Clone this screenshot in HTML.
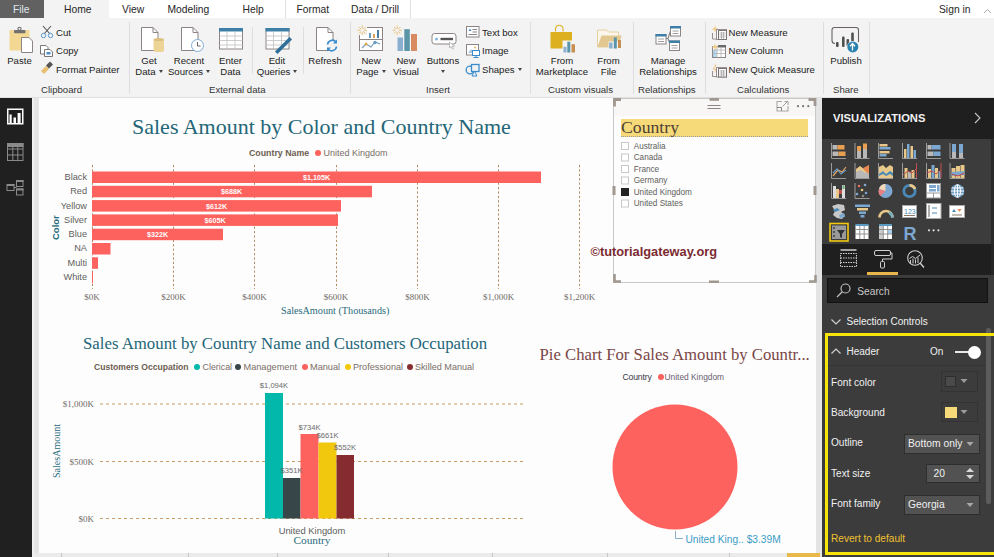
<!DOCTYPE html>
<html><head><meta charset="utf-8">
<style>
*{margin:0;padding:0;box-sizing:border-box}
html,body{width:994px;height:557px;overflow:hidden;background:#fff;font-family:"Liberation Sans",sans-serif}
.a{position:absolute;white-space:nowrap}
#tabs{position:absolute;left:0;top:0;width:994px;height:19px;background:#fff;border-bottom:1px solid #dcdcdc}
.tab{position:absolute;top:4px;font-size:10.3px;color:#262626}
#ribbon{position:absolute;left:0;top:18px;width:994px;height:80px;background:#f3f3f3;border-bottom:1px solid #e0e0e0}
.rl{position:absolute;font-size:9.6px;color:#222;white-space:nowrap;text-align:center;line-height:11px}
.gl{position:absolute;top:66px;font-size:9.6px;color:#333;white-space:nowrap}
.sep{position:absolute;top:4px;width:1px;height:72px;background:#dedede}
#nav{position:absolute;left:0;top:98px;width:32px;height:459px;background:#202020}
#canvasbg{position:absolute;left:32px;top:98px;width:790px;height:459px;background:#e4e4e4;border-left:2px solid #f0f0f0}
#canvas{position:absolute;left:39px;top:98px;width:777px;height:455px;background:#fdfdfd}
#pane{position:absolute;left:822px;top:98px;width:172px;height:459px;background:#1f1f1f}
.serif{font-family:"Liberation Serif",serif}
.dd{display:inline-block;width:0;height:0;border-left:2.5px solid transparent;border-right:2.5px solid transparent;border-top:3px solid #444;vertical-align:2px;margin-left:3px}
</style></head><body>
<div id="tabs">
  <div class="a" style="left:0;top:0;width:44px;height:19px;background:#616161"></div>
  <div class="a" style="left:44px;top:0;width:65px;height:19px;background:#f3f3f3"></div>
  <div class="tab" style="left:13px;color:#dfe6ee">File</div>
  <div class="tab" style="left:64px">Home</div>
  <div class="tab" style="left:122px">View</div>
  <div class="tab" style="left:167.5px">Modeling</div>
  <div class="tab" style="left:242.5px">Help</div>
  <div class="a" style="left:285px;top:0;width:1px;height:18px;background:#e0e0e0"></div>
  <div class="tab" style="left:296.5px">Format</div>
  <div class="tab" style="left:351px">Data / Drill</div>
  <div class="a" style="left:410px;top:0;width:1px;height:18px;background:#e0e0e0"></div>
  <div class="tab" style="left:939px">Sign in</div>
</div>
<div id="ribbon">
  <!-- clipboard -->
  <div class="rl" style="left:0;top:37px;width:39px">Paste</div>
  <div class="rl" style="left:56px;top:9px">Cut</div>
  <div class="rl" style="left:56px;top:27px">Copy</div>
  <div class="rl" style="left:56px;top:46px">Format Painter</div>
  <div class="gl" style="left:41px">Clipboard</div>
  <div class="sep" style="left:129px"></div>
  <!-- external data -->
  <div class="rl" style="left:129px;top:37px;width:40px">Get<br>Data<span class="dd"></span></div>
  <div class="rl" style="left:167px;top:37px;width:44px">Recent<br>Sources<span class="dd"></span></div>
  <div class="rl" style="left:210px;top:37px;width:41px">Enter<br>Data</div>
  <div class="sep" style="left:252px;top:9px;height:47px"></div>
  <div class="rl" style="left:255px;top:37px;width:44px">Edit<br>Queries<span class="dd"></span></div>
  <div class="gl" style="left:209px">External data</div>
  <div class="sep" style="left:303px;top:9px;height:47px"></div>
  <div class="rl" style="left:304px;top:37px;width:42px">Refresh</div>
  <div class="sep" style="left:350px"></div>
  <!-- insert -->
  <div class="rl" style="left:352px;top:37px;width:38px">New<br>Page<span class="dd"></span></div>
  <div class="rl" style="left:388px;top:37px;width:36px">New<br>Visual</div>
  <div class="rl" style="left:423px;top:37px;width:40px">Buttons<br><span class="dd" style="margin-left:0"></span></div>
  <div class="rl" style="left:482px;top:9px">Text box</div>
  <div class="rl" style="left:482px;top:27px">Image</div>
  <div class="rl" style="left:482px;top:46px">Shapes<span class="dd"></span></div>
  <div class="gl" style="left:426px">Insert</div>
  <div class="sep" style="left:530px"></div>
  <div class="rl" style="left:532px;top:37px;width:60px">From<br>Marketplace</div>
  <div class="rl" style="left:592px;top:37px;width:33px">From<br>File</div>
  <div class="gl" style="left:548px">Custom visuals</div>
  <div class="sep" style="left:633px"></div>
  <div class="rl" style="left:634px;top:37px;width:68px">Manage<br>Relationships</div>
  <div class="gl" style="left:638px">Relationships</div>
  <div class="sep" style="left:705px"></div>
  <div class="rl" style="left:728.5px;top:9px">New Measure</div>
  <div class="rl" style="left:728.5px;top:27px">New Column</div>
  <div class="rl" style="left:728.5px;top:46px">New Quick Measure</div>
  <div class="gl" style="left:737px">Calculations</div>
  <div class="sep" style="left:823px"></div>
  <div class="rl" style="left:826px;top:37px;width:40px">Publish</div>
  <div class="gl" style="left:833px">Share</div>
  <div class="sep" style="left:869px"></div>

<svg class="a" style="left:0;top:-18px" width="994" height="97">
 <!-- Paste -->
 <rect x="9.5" y="30" width="20" height="20.5" fill="#f2d892"/>
 <rect x="14" y="30" width="11.5" height="3.3" rx="1" fill="#707070"/>
 <circle cx="19.5" cy="28.8" r="1.6" fill="none" stroke="#707070" stroke-width="1.1"/>
 <path d="M21.5 37.5 H29 L32.5 41 V52.5 H21.5 Z" fill="#fff" stroke="#8c8484" stroke-width="1"/>
 <!-- Cut -->
 <path d="M43 26 L50 34 M51 26 L44 34" stroke="#555" stroke-width="1.1"/>
 <circle cx="43.5" cy="35.5" r="2.2" fill="none" stroke="#5a9ad0" stroke-width="1"/>
 <circle cx="50.5" cy="35.5" r="2.2" fill="none" stroke="#5a9ad0" stroke-width="1"/>
 <!-- Copy -->
 <path d="M40.5 45.5 H46 L48 47.5 V54 H40.5 Z" fill="#fff" stroke="#777" stroke-width="1"/>
 <path d="M44.5 49.5 H50 L52.5 52 V56.5 H44.5 Z" fill="#fff" stroke="#777" stroke-width="1"/>
 <rect x="46.5" y="52" width="4" height="2.5" fill="#4d8fc8"/>
 <!-- Format painter -->
 <path d="M41 71 L46 66 L49 69 L44 74 Z" fill="#e8c070"/>
 <path d="M46 65.5 L50 61.5 L53 64.5 L49 68.5 Z" fill="#555"/>
 <!-- Get Data -->
 <path d="M141.5 27.5 H153 L158 32.5 V50.5 H141.5 Z" fill="#fff" stroke="#8c8484" stroke-width="1"/>
 <path d="M153 27.5 V32.5 H158" fill="none" stroke="#8c8484" stroke-width="1"/>
 <rect x="153.5" y="38.5" width="10.5" height="13.5" rx="2.5" fill="#ecd496"/>
 <ellipse cx="158.75" cy="39.5" rx="5.25" ry="1.6" fill="#dcc080"/>
 <!-- Recent Sources -->
 <path d="M181.5 27.5 H193 L198 32.5 V50.5 H181.5 Z" fill="#fff" stroke="#8c8484" stroke-width="1"/>
 <path d="M193 27.5 V32.5 H198" fill="none" stroke="#8c8484" stroke-width="1"/>
 <circle cx="197.5" cy="45.5" r="6" fill="#fff" stroke="#70a4d4" stroke-width="0.9"/>
 <path d="M197.5 42 V46 H200.5" fill="none" stroke="#555" stroke-width="0.9"/>
 <!-- Enter Data -->
 <rect x="219.5" y="28.5" width="23" height="20.5" fill="#fff" stroke="#8c8484" stroke-width="1"/>
 <rect x="219" y="28" width="24" height="3.5" fill="#3e7fa8"/>
 <path d="M219.5 36 H242.5 M219.5 40.5 H242.5 M219.5 45 H242.5 M227 31.5 V49 M235 31.5 V49" stroke="#c0c0c0" stroke-width="0.8"/>
 <!-- Edit Queries -->
 <rect x="266" y="28.5" width="23" height="20.5" fill="#fff" stroke="#8c8484" stroke-width="1"/>
 <rect x="265.5" y="28" width="24" height="3.5" fill="#3e7fa8"/>
 <path d="M266 36 H289 M266 40.5 H289 M266 45 H289 M273.5 31.5 V49 M281.5 31.5 V49" stroke="#c0c0c0" stroke-width="0.8"/>
 <path d="M275 51.5 L289.5 37 L292 39.5 L277.5 54 Z" fill="#2e6f9a"/>
 <!-- Refresh -->
 <path d="M316.5 27.5 H328 L333 32.5 V50.5 H316.5 Z" fill="#fff" stroke="#8c8484" stroke-width="1"/>
 <path d="M328 27.5 V32.5 H333" fill="none" stroke="#8c8484" stroke-width="1"/>
 <circle cx="332" cy="45.5" r="5.5" fill="#f3f3f3"/>
 <path d="M327.5 44.5 A4.8 4.8 0 0 1 336 42 M336.5 46.5 A4.8 4.8 0 0 1 328 49" fill="none" stroke="#3a8ccc" stroke-width="1.6"/>
 <path d="M337 39.5 V43.5 H333 Z M327 51.5 V47.5 H331 Z" fill="#3a8ccc"/>
 <!-- New Page -->
 <rect x="359.5" y="27.5" width="23" height="23" fill="#fff" stroke="#8c8484" stroke-width="1"/>
 <path d="M359.5 39.5 H382.5" stroke="#8c8484" stroke-width="1"/>
 <rect x="357" y="25" width="10" height="10" fill="#f3f3f3"/><path d="M359 27 L365.5 33.5 M365.5 27 L359 33.5 M362.2 25.5 V35 M357.5 30.2 H367" stroke="#e8c078" stroke-width="1"/><circle cx="362.2" cy="30.2" r="1.8" fill="#f3f3f3"/>
 <rect x="369" y="33" width="2" height="5" fill="#6a9ac0"/><rect x="373" y="34" width="2" height="4" fill="#e0a050"/><rect x="377" y="30" width="2" height="8" fill="#4a80a8"/>
 <path d="M362 48 L366 44 L371 47 L375 42 L380 44" fill="none" stroke="#7aa0c0" stroke-width="1.2"/>
 <circle cx="366" cy="44" r="1.5" fill="#e0a850"/><circle cx="375" cy="42.5" r="1.7" fill="#6a9ac0"/>
 <!-- New Visual -->
 <path d="M394 27 L400.5 33.5 M400.5 27 L394 33.5 M397.2 25.5 V35 M392.5 30.2 H402" stroke="#e8c078" stroke-width="1"/><circle cx="397.2" cy="30.2" r="1.8" fill="#f3f3f3"/>
 <rect x="397.5" y="37.5" width="5.5" height="13.5" fill="#8aaed0"/>
 <rect x="404.3" y="29.2" width="5.5" height="21.8" fill="#5a95a8"/>
 <rect x="411" y="34" width="6" height="17" fill="#d88a60"/>
 <!-- Buttons -->
 <rect x="432" y="33.5" width="24" height="10.5" rx="2.5" fill="#fff" stroke="#8c8484" stroke-width="1"/>
 <circle cx="436.5" cy="39" r="1.6" fill="#8ab8e0"/>
 <rect x="440.5" y="37.8" width="12.5" height="2.4" fill="#555"/>
 <path d="M449.5 42 V48 L451 46.5 L452.5 49 L453.5 48.5 L452.3 46 H454.5 Z" fill="#fff" stroke="#999" stroke-width="0.6"/>
 <!-- Text box / Image / Shapes -->
 <rect x="466.5" y="26.5" width="12.5" height="10.5" fill="#fff" stroke="#8c8484" stroke-width="1"/>
 <path d="M468.5 31 L470 28.5 L471.5 31 Z" fill="#4a8ac8"/><path d="M472.5 29.5 H477 M472.5 32 H477 M468.5 34.5 H477" stroke="#777" stroke-width="0.9"/>
 <rect x="466.5" y="44.5" width="12" height="10.5" fill="#fff" stroke="#8c8484" stroke-width="1"/>
 <path d="M468 53 L471 49 L474 53 Z" fill="#a8c8e0"/><circle cx="475" cy="47.5" r="1" fill="#e8b060"/>
 <rect x="472.5" y="50.5" width="7" height="5" fill="#fff" stroke="#3a8ccc" stroke-width="1"/><path d="M476 55.5 V57.5 M473.5 57.5 H478.5" stroke="#3a8ccc" stroke-width="1"/>
 <circle cx="470" cy="70" r="3.8" fill="none" stroke="#3a8ccc" stroke-width="1.3"/>
 <rect x="471.5" y="64.5" width="7.5" height="7" fill="#f3f3f3" stroke="#3a8ccc" stroke-width="1.3"/>
 <path d="M472 76 L474.5 71 L477 76 Z" fill="none" stroke="#3a8ccc" stroke-width="1"/>
 <!-- From Marketplace -->
 <path d="M555.5 31.5 V28.5 A3.8 3.8 0 0 1 563 28.5 V31.5" fill="none" stroke="#e0b020" stroke-width="1.1"/>
 <path d="M550.5 32 H572 V48.5 H550.5 Z" fill="#ddb020"/>
 <rect x="562.5" y="40.5" width="13.5" height="12.5" fill="#f3f3f3"/>
 <rect x="563.5" y="46.8" width="3" height="5.7" fill="#8ab0d0"/><rect x="567.3" y="41.7" width="3" height="10.8" fill="#5a95a8"/><rect x="571.5" y="44.2" width="3.5" height="8.3" fill="#c89050"/>
 <!-- From File -->
 <path d="M597.5 30 H606.5 L608.5 32 H618.5 V47 H597.5 Z" fill="#fbf6ec" stroke="#e6d0a0" stroke-width="1"/>
 <path d="M597.5 47 L601.5 35.5 H621.5 L618.5 47 Z" fill="#e2c890"/>
 <rect x="608.5" y="41.5" width="13" height="7.5" fill="#f3f3f3"/>
 <rect x="609.1" y="42.5" width="3.4" height="6" fill="#8ab0d0"/><rect x="613.8" y="37.4" width="3" height="11.1" fill="#5a95a8"/><rect x="618" y="40" width="3" height="8" fill="#c89050"/>
 <!-- Manage Relationships -->
 <path d="M666 38.5 H668 L670.5 31 M666 38.5 H668 L670.5 45.5" fill="none" stroke="#777" stroke-width="1"/>
 <rect x="670.5" y="26.5" width="10" height="9.5" fill="#fff" stroke="#8c8484" stroke-width="1"/><rect x="670" y="26" width="11" height="2.5" fill="#3e7fa8"/>
 <path d="M672.5 31 H678.5 M672.5 33.5 H678.5" stroke="#888" stroke-width="0.8"/>
 <rect x="656" y="34.5" width="10" height="9.5" fill="#fff" stroke="#8c8484" stroke-width="1"/><rect x="655.5" y="34" width="11" height="2.5" fill="#3e7fa8"/>
 <path d="M658 39 H664 M658 41.5 H664" stroke="#888" stroke-width="0.8"/>
 <rect x="669.5" y="41" width="10" height="9.5" fill="#fff" stroke="#8c8484" stroke-width="1"/><rect x="669" y="40.5" width="11" height="2.5" fill="#3e7fa8"/>
 <path d="M671.5 45.5 H677.5 M671.5 48 H677.5" stroke="#888" stroke-width="0.8"/>
 <!-- Calculations icons -->
 <path d="M712.5 33 V39 H717" fill="none" stroke="#9a9090" stroke-width="1"/>
 <path d="M715 25.5 L716 28 L718.5 29 L716 30 L715 32.5 L714 30 L711.5 29 L714 28 Z" fill="#f0d090"/>
 <rect x="716.5" y="29.5" width="10" height="10" fill="#fff" stroke="#9a9090" stroke-width="1"/>
 <rect x="718.5" y="30.5" width="8" height="9" fill="#fff" stroke="#7a7474" stroke-width="1"/>
 <path d="M719.5 33 H725.5 M719.5 35 H725.5 M719.5 37 H725.5 M721.5 32 V39 M723.5 32 V39" stroke="#a8a8a8" stroke-width="0.8"/>
 <rect x="712.5" y="46.5" width="13" height="11" fill="#fff" stroke="#8c8484" stroke-width="1"/>
 <rect x="718" y="45" width="8" height="2.5" fill="#6a6a6a"/>
 <rect x="713" y="50" width="3.5" height="7" fill="#b0d8f0"/>
 <path d="M712.5 50 H725.5 M712.5 53.5 H725.5 M717 47 V57.5 M721 47 V57.5" stroke="#b0b0b0" stroke-width="0.8"/>
 <path d="M715 43.5 L716 46 L718.5 47 L716 48 L715 50.5 L714 48 L711.5 47 L714 46 Z" fill="#f0d090"/>
 <path d="M712.5 71 V76.5 H717" fill="none" stroke="#9a9090" stroke-width="1"/>
 <path d="M715 63.5 L716.5 66 L714 68 L717 69.5 L714 73 L715 70 L712.5 69 L714.5 66.5 Z" fill="#f0c890"/>
 <rect x="716.5" y="67.5" width="10" height="9.5" fill="#fff" stroke="#9a9090" stroke-width="1"/>
 <rect x="718.5" y="68.5" width="8" height="8.5" fill="#fff" stroke="#7a7474" stroke-width="1"/>
 <path d="M719.5 71 H725.5 M719.5 73 H725.5 M719.5 75 H725.5 M721.5 70 V77 M723.5 70 V77" stroke="#a8a8a8" stroke-width="0.8"/>
 <!-- Publish -->
 <path d="M835 43.5 A3 3 0 0 1 832 40.5 V30 A2.5 2.5 0 0 1 834.5 27.5 H856 A2.5 2.5 0 0 1 858.5 30 V42" fill="none" stroke="#6a6262" stroke-width="1.1"/>
 <rect x="836" y="42" width="2.6" height="5" rx="1" fill="#505050"/><rect x="842" y="36.5" width="2.6" height="10.5" rx="1" fill="#505050"/><rect x="846.5" y="39" width="2.6" height="7" rx="1" fill="#505050"/><rect x="851.2" y="32.5" width="2.6" height="9" rx="1" fill="#505050"/>
 <circle cx="852.8" cy="46.9" r="5.8" fill="#f3f3f3"/><circle cx="852.8" cy="46.9" r="5.5" fill="#2a82b0"/>
 <path d="M852.5 50.5 V44 M850 46.3 L852.5 43.5 L855 46.3" fill="none" stroke="#fff" stroke-width="1.3"/>
 <!-- Sign in caret -->
 <path d="M984 13 L987.5 9.5 L991 13" fill="none" stroke="#aaa" stroke-width="1"/>
</svg>
</div>
<div id="nav"></div>
<svg class="a" style="left:0;top:97px" width="32" height="110">
 <rect x="7.75" y="12.25" width="15" height="14.5" fill="none" stroke="#fff" stroke-width="1.5"/>
 <rect x="9.5" y="17.5" width="2.2" height="9" fill="#fff"/><rect x="13.5" y="20.5" width="2.5" height="6" fill="#fff"/><rect x="17.6" y="16" width="3" height="10.5" fill="#fff"/>
 <g fill="none" stroke="#8a8a8a" stroke-width="1">
  <rect x="7.5" y="46.5" width="15.5" height="17"/>
  <path d="M7.5 52 H23 M7.5 58 H23 M12.8 50 V63.5 M17.8 50 V63.5"/>
 </g>
 <rect x="7" y="46" width="16.5" height="4" fill="#8a8a8a"/>
 <g fill="none" stroke="#8a8a8a" stroke-width="1">
  <rect x="7" y="87.5" width="7" height="6"/><rect x="16.5" y="83.5" width="6.5" height="6"/><rect x="16.5" y="92" width="6.5" height="6"/>
  <path d="M14 90.5 H16.5"/>
 </g>
 <rect x="7" y="87" width="7.5" height="2" fill="#8a8a8a"/><rect x="16" y="83" width="7.5" height="2" fill="#8a8a8a"/><rect x="16" y="91.5" width="7.5" height="2" fill="#8a8a8a"/>
</svg>
<div id="canvasbg"></div>

<div id="canvas"></div>
<!-- Bar chart 1 -->
<div class="a serif" style="left:132px;top:115px;font-size:22px;line-height:24px;color:#236678">Sales Amount by Color and Country Name</div>
<div class="a" style="left:249px;top:147px;font-size:8.8px;font-weight:700;color:#6e5e50;line-height:12px">Country Name</div>
<div class="a" style="left:315px;top:150px;width:6px;height:6px;border-radius:50%;background:#fd625e"></div>
<div class="a" style="left:323.5px;top:147px;font-size:9px;color:#7a6e66;line-height:12px">United Kingdom</div>
<svg class="a" style="left:0;top:0" width="994" height="557">
 <g stroke="#b48a60" stroke-width="1" stroke-dasharray="2.2,2.2">
  <line x1="92.5" y1="165" x2="92.5" y2="289"/>
  <line x1="173.5" y1="165" x2="173.5" y2="289"/>
  <line x1="254.5" y1="165" x2="254.5" y2="289"/>
  <line x1="336.5" y1="165" x2="336.5" y2="289"/>
  <line x1="417.5" y1="165" x2="417.5" y2="289"/>
  <line x1="498.5" y1="165" x2="498.5" y2="289"/>
  <line x1="579.5" y1="165" x2="579.5" y2="289"/>
 </g>
 <g fill="#fd625e">
  <rect x="92" y="171.5" width="449" height="11.5"/>
  <rect x="92" y="185.8" width="280" height="11.5"/>
  <rect x="92" y="200.1" width="249" height="11.5"/>
  <rect x="92" y="214.4" width="246" height="11.5"/>
  <rect x="92" y="228.7" width="131" height="11.5"/>
  <rect x="92" y="243" width="18.5" height="11.5"/>
  <rect x="92" y="257.3" width="6" height="11.5"/>
  <rect x="92" y="271.6" width="1" height="11.5"/>
 </g>
 <!-- chart 2 gridlines -->
 <g stroke="#c89c64" stroke-width="1" stroke-dasharray="3,3">
  <line x1="100" y1="404" x2="525" y2="404"/>
  <line x1="100" y1="461.5" x2="525" y2="461.5"/>
  <line x1="100" y1="518.5" x2="525" y2="518.5"/>
 </g>
 <rect x="265" y="393" width="18" height="125.5" fill="#01b8aa"/>
 <rect x="283" y="478" width="17.5" height="40.5" fill="#374649"/>
 <rect x="300.5" y="434" width="18" height="84.5" fill="#fd625e"/>
 <rect x="318.5" y="442.5" width="18" height="76" fill="#f2c80f"/>
 <rect x="336.5" y="455" width="17.5" height="63.5" fill="#862c30"/>
 <!-- pie -->
 <circle cx="675" cy="467" r="62.5" fill="#fd625e"/>
 <path d="M675.5 531 V538.5 H683" stroke="#8ab0c8" stroke-width="1" fill="none"/>
 <!-- slicer frame -->
 <rect x="613.5" y="98.5" width="202" height="184" fill="none" stroke="#c8c8c8" stroke-width="1"/>
</svg>
<div class="a" style="left:50px;top:170px;width:37px;text-align:right;font-size:9.2px;line-height:14.3px;color:#605e5c">Black<br>Red<br>Yellow<br>Silver<br>Blue<br>NA<br>Multi<br>White</div>
<div class="a" style="left:44px;top:222px;transform:rotate(-90deg);font-size:9.5px;font-weight:700;color:#2a6b7c;line-height:12px;width:24px;text-align:center">Color</div>
<div class="a" style="left:276.5px;top:172px;width:80px;text-align:center;font-size:7.2px;font-weight:700;color:#fff;line-height:11px">$1,105K</div>
<div class="a" style="left:191.5px;top:186.3px;width:80px;text-align:center;font-size:7.2px;font-weight:700;color:#fff;line-height:11px">$688K</div>
<div class="a" style="left:176.5px;top:200.6px;width:80px;text-align:center;font-size:7.2px;font-weight:700;color:#fff;line-height:11px">$612K</div>
<div class="a" style="left:175px;top:214.9px;width:80px;text-align:center;font-size:7.2px;font-weight:700;color:#fff;line-height:11px">$605K</div>
<div class="a" style="left:117.5px;top:229.2px;width:80px;text-align:center;font-size:7.2px;font-weight:700;color:#fff;line-height:11px">$322K</div>
<div class="a serif" style="left:72px;top:291px;width:40px;text-align:center;font-size:9px;color:#706a66;line-height:12px">$0K</div>
<div class="a serif" style="left:153.5px;top:291px;width:40px;text-align:center;font-size:9px;color:#706a66;line-height:12px">$200K</div>
<div class="a serif" style="left:234.5px;top:291px;width:40px;text-align:center;font-size:9px;color:#706a66;line-height:12px">$400K</div>
<div class="a serif" style="left:316px;top:291px;width:40px;text-align:center;font-size:9px;color:#706a66;line-height:12px">$600K</div>
<div class="a serif" style="left:397.5px;top:291px;width:40px;text-align:center;font-size:9px;color:#706a66;line-height:12px">$800K</div>
<div class="a serif" style="left:473.5px;top:291px;width:50px;text-align:center;font-size:9px;color:#706a66;line-height:12px">$1,000K</div>
<div class="a serif" style="left:554.5px;top:291px;width:50px;text-align:center;font-size:9px;color:#706a66;line-height:12px">$1,200K</div>
<div class="a serif" style="left:281px;top:305px;font-size:10.2px;color:#2a6b7c;line-height:12px">SalesAmount (Thousands)</div>
<!-- chart 2 -->
<div class="a serif" style="left:83px;top:334px;font-size:16.8px;line-height:20px;color:#236678">Sales Amount by Country Name and Customers Occupation</div>
<div class="a" style="left:94px;top:361px;font-size:8.6px;font-weight:700;color:#6e5e50;line-height:12px">Customers Occupation</div>
<div class="a" style="left:194px;top:364px;width:6px;height:6px;border-radius:50%;background:#01b8aa"></div>
<div class="a" style="left:202.5px;top:361px;font-size:8.9px;color:#7a6e66;line-height:12px">Clerical</div>
<div class="a" style="left:235px;top:364px;width:6px;height:6px;border-radius:50%;background:#374649"></div>
<div class="a" style="left:243.5px;top:361px;font-size:9.2px;color:#7a6e66;line-height:12px">Management</div>
<div class="a" style="left:302px;top:364px;width:6px;height:6px;border-radius:50%;background:#fd625e"></div>
<div class="a" style="left:310px;top:361px;font-size:9.2px;color:#7a6e66;line-height:12px">Manual</div>
<div class="a" style="left:345px;top:364px;width:6px;height:6px;border-radius:50%;background:#f2c80f"></div>
<div class="a" style="left:353px;top:361px;font-size:9.1px;color:#7a6e66;line-height:12px">Professional</div>
<div class="a" style="left:407px;top:364px;width:6px;height:6px;border-radius:50%;background:#862c30"></div>
<div class="a" style="left:415px;top:361px;font-size:9.1px;color:#7a6e66;line-height:12px">Skilled Manual</div>
<div class="a serif" style="left:40px;top:398px;width:54px;text-align:right;font-size:9px;color:#706a66;line-height:12px">$1,000K</div>
<div class="a serif" style="left:40px;top:456px;width:54px;text-align:right;font-size:9px;color:#706a66;line-height:12px">$500K</div>
<div class="a serif" style="left:40px;top:513px;width:54px;text-align:right;font-size:9px;color:#706a66;line-height:12px">$0K</div>
<div class="a serif" style="left:22px;top:445px;width:70px;text-align:center;transform:rotate(-90deg);font-size:10px;color:#2a6b7c;line-height:12px">SalesAmount</div>
<div class="a" style="left:249px;top:379.5px;width:50px;text-align:center;font-size:7.6px;color:#6a6a6a;line-height:11px">$1,094K</div>
<div class="a" style="left:271.5px;top:464.5px;width:40px;text-align:center;font-size:7.6px;color:#6a6a6a;line-height:11px">$351K</div>
<div class="a" style="left:289.5px;top:421.5px;width:40px;text-align:center;font-size:7.6px;color:#6a6a6a;line-height:11px">$734K</div>
<div class="a" style="left:307.5px;top:430px;width:40px;text-align:center;font-size:7.6px;color:#6a6a6a;line-height:11px">$661K</div>
<div class="a" style="left:325px;top:442px;width:40px;text-align:center;font-size:7.6px;color:#6a6a6a;line-height:11px">$552K</div>
<div class="a" style="left:262px;top:525px;width:100px;text-align:center;font-size:9.4px;color:#605e5c;line-height:12px">United Kingdom</div>
<div class="a serif" style="left:262px;top:534px;width:100px;text-align:center;font-size:11.3px;color:#2a6b7c;line-height:13px">Country</div>
<!-- pie -->
<div class="a serif" style="left:539.5px;top:345px;font-size:16.7px;line-height:20px;color:#7a4646">Pie Chart For Sales Amount by Countr...</div>
<div class="a" style="left:622.5px;top:371px;font-size:8.7px;color:#3a3a4a;line-height:12px;letter-spacing:-0.2px">Country</div>
<div class="a" style="left:657.5px;top:373.7px;width:6px;height:6px;border-radius:50%;background:#fd625e"></div>
<div class="a" style="left:664.5px;top:371px;font-size:8.4px;color:#6a6070;line-height:12px">United Kingdom</div>
<div class="a" style="left:685.5px;top:533.5px;font-size:10.2px;color:#3c9cc4;line-height:12px">United King.. $3.39M</div>
<!-- slicer -->
<div class="a" style="left:614px;top:99px;width:201px;height:17px;background:#f8f7f6"></div>
<div class="a" style="left:620.5px;top:118.5px;width:187.5px;height:18.5px;background:#f6d978;border-bottom:1px dotted #9a9a9a"></div>
<div class="a serif" style="left:621px;top:117px;font-size:17.7px;line-height:20px;color:#4d3f35">Country</div>
<div class="a" style="left:633.7px;top:140.5px;font-size:8.2px;color:#605e5c;line-height:11.55px">Australia<br>Canada<br>France<br>Germany<br>United Kingdom<br>United States</div>
<div class="a" style="left:590.5px;top:243.5px;font-size:12.8px;font-weight:700;color:#7b2a30;line-height:16px">©tutorialgateway.org</div>


<div id="pane"></div>
<div class="a" style="left:833px;top:111px;font-size:11.2px;font-weight:700;color:#f0f0f0;line-height:14px">VISUALIZATIONS</div>
<svg class="a" style="left:971.5px;top:111px" width="10" height="14"><path d="M3 2 L8 7 L3 12" stroke="#c8c8c8" stroke-width="1.1" fill="none"/></svg>
<div class="a" style="left:991px;top:138px;width:3px;height:419px;background:#262626"></div>
<div class="a" style="left:822px;top:138.5px;width:168.5px;height:105.5px;background:#3c3c3c"></div>
<div class="a" style="left:990.5px;top:138.5px;width:3.5px;height:105.5px;background:#2a2a2a"></div>
<svg class="a" style="left:822px;top:138px" width="170" height="106">
 <g stroke="#9a9a9a" stroke-width="1" fill="none">
  <path d="M9.5 5 V20.5 H24"/><path d="M33 5 V20.5 H47.5"/><path d="M56.5 5 V20.5 H71"/><path d="M80.5 5 V20.5 H95"/><path d="M104.5 5 V20.5 H119"/><path d="M128 5 V20.5 H142.5"/>
  <path d="M9.5 25 V40.5 H24"/><path d="M33 25 V40.5 H47.5"/><path d="M56.5 25 V40.5 H71"/><path d="M80.5 25 V40.5 H95"/><path d="M104.5 25 V40.5 H119"/><path d="M128 25 V40.5 H142.5"/>
  <path d="M9.5 45 V60.5 H24"/><path d="M33 45 V60.5 H47.5"/>
 </g>
 <!-- r1 -->
 <rect x="10.5" y="7" width="5" height="4.5" fill="#b8b8b8"/><rect x="15.5" y="7" width="7" height="4.5" fill="#e8a050"/>
 <rect x="10.5" y="13.5" width="6" height="4.5" fill="#b8b8b8"/><rect x="16.5" y="13.5" width="7" height="4.5" fill="#e8a050"/>
 <rect x="35" y="13" width="4" height="7" fill="#b8b8b8"/><rect x="35" y="8" width="4" height="5" fill="#e8a050"/>
 <rect x="41" y="11" width="4" height="9" fill="#b8b8b8"/><rect x="41" y="5.5" width="4" height="5.5" fill="#e8a050"/>
 <rect x="57.5" y="6" width="8" height="2.5" fill="#e8c88a"/><rect x="57.5" y="9" width="11" height="2.5" fill="#7ba7d0"/><rect x="57.5" y="13" width="10" height="2.5" fill="#e8c88a"/><rect x="57.5" y="16" width="7" height="2.5" fill="#7ba7d0"/>
 <rect x="82" y="11" width="2.5" height="9" fill="#e8c88a"/><rect x="85" y="6" width="2.5" height="14" fill="#7ba7d0"/><rect x="88.5" y="8" width="2.5" height="12" fill="#e8c88a"/><rect x="91.5" y="12" width="2.5" height="8" fill="#7ba7d0"/>
 <rect x="105.5" y="7" width="4" height="4.5" fill="#b8b8b8"/><rect x="109.5" y="7" width="9" height="4.5" fill="#7ba7d0"/>
 <rect x="105.5" y="13.5" width="6" height="4.5" fill="#b8b8b8"/><rect x="111.5" y="13.5" width="7" height="4.5" fill="#7ba7d0"/>
 <rect x="130" y="6" width="4" height="8" fill="#7ba7d0"/><rect x="130" y="14" width="4" height="6" fill="#b8b8b8"/>
 <rect x="137" y="6" width="4" height="9" fill="#7ba7d0"/><rect x="137" y="15" width="4" height="5" fill="#b8b8b8"/>
 <!-- r2 -->
 <path d="M11 38 L16 32 L20 34 L24 29" fill="none" stroke="#e8a860" stroke-width="1.2"/><path d="M11 35 L15 31 L19 36 L24 32" fill="none" stroke="#6a9ac0" stroke-width="1.2"/>
 <path d="M34 40 V31 L38 28 L42 31 L47 27 V40 Z" fill="#e8c88a"/><path d="M34 40 V34 L39 32 L43 35 L47 33 V40 Z" fill="#b8b8b8"/><path d="M41 30 L47 27 V36 L43 33 Z" fill="#e88850"/>
 <path d="M57 40 V29 L61 27 L64 30 L68 27 L71 29 V40 Z" fill="#e8c88a"/><path d="M57 36 L61 33 L64 36 L68 33 L71 35 V38 L68 36 L64 38 L61 36 L57 38 Z" fill="#4a8ab8"/>
 <rect x="82.5" y="30" width="3" height="10" fill="#e8c88a"/><rect x="86" y="34" width="3" height="6" fill="#b8b8b8"/><rect x="89.5" y="32" width="3" height="8" fill="#e8c88a"/>
 <path d="M81 37 L86 33 L90 35 L95 30" fill="none" stroke="#c05050" stroke-width="1"/><path d="M94.5 25 V40" stroke="#c05050" stroke-width="1"/>
 <rect x="106" y="31" width="3" height="9" fill="#e8c88a"/><rect x="109.5" y="27" width="3" height="13" fill="#7ba7d0"/><rect x="113" y="30" width="3" height="10" fill="#e8c88a"/><rect x="116.5" y="33" width="2" height="7" fill="#7ba7d0"/>
 <path d="M104.5 35 L110 33 L114 36 L119 32" fill="none" stroke="#c05050" stroke-width="1"/><path d="M119 25 V40" stroke="#c05050" stroke-width="1"/>
 <rect x="129.5" y="30" width="4" height="10" fill="#e8c88a"/><rect x="134" y="28" width="4" height="12" fill="#e8c88a"/><rect x="138.5" y="27" width="4" height="13" fill="#e8c88a"/>
 <path d="M129.5 34 L142.5 33 V37 L129.5 38 Z" fill="#7ba7d0"/><path d="M129.5 36 L136 38 L142.5 35" fill="none" stroke="#c04040" stroke-width="1"/>
 <!-- r3 -->
 <rect x="11" y="48" width="3" height="12" fill="#ddd"/><rect x="14" y="51" width="3" height="9" fill="#e8c88a"/><rect x="17" y="52" width="3" height="4" fill="#c05050"/><rect x="20" y="47" width="3" height="13" fill="#ddd"/><rect x="20.5" y="47" width="2" height="4" fill="#7ab080"/>
 <circle cx="37" cy="48" r="1.3" fill="#e07060"/><circle cx="43" cy="47" r="1.3" fill="#7ba7d0"/><circle cx="40" cy="52" r="1.3" fill="#e8c88a"/><circle cx="35" cy="56" r="1.3" fill="#7ba7d0"/><circle cx="44" cy="55" r="1.3" fill="#7ba7d0"/><circle cx="41" cy="58" r="1.3" fill="#888"/>
 <circle cx="63.5" cy="53" r="7" fill="#7ba7d0"/><path d="M63.5 53 V46 A7 7 0 0 0 57 51 Z" fill="#f0d8b8"/><path d="M63.5 53 L57 51 A7 7 0 0 0 58.5 58 Z" fill="#e88080"/>
 <circle cx="87.5" cy="53" r="5.7" fill="none" stroke="#4a88b8" stroke-width="2.8"/><path d="M87.5 47.3 A5.7 5.7 0 0 1 93 51" fill="none" stroke="#e8c88a" stroke-width="2.8"/>
 <rect x="104.5" y="45.5" width="14" height="14.5" fill="#fff" stroke="#9a9a9a"/><rect x="107" y="47" width="7" height="3" fill="#7ba7d0"/><rect x="107" y="51" width="7" height="2.5" fill="#7ba7d0"/><rect x="115" y="47" width="2.5" height="6.5" fill="#7ba7d0"/><path d="M104.5 55 H118.5 M111.5 55 V60" stroke="#9a9a9a"/>
 <circle cx="135.5" cy="53" r="6.8" fill="#6a9ac0"/><path d="M129.5 50 H141.5 M129 53 H142 M129.5 56 H141.5 M135.5 46.5 V59.5" stroke="#fff" stroke-width="1"/><ellipse cx="135.5" cy="53" rx="3" ry="6.5" fill="none" stroke="#fff" stroke-width="1"/>
 <!-- r4 -->
 <path d="M10 68 L16 66 L22 67 L23 72 L19 74 L23 77 L20 81 L15 80 L11 77 L13 73 Z" fill="#c8c8c8"/><path d="M11 72 L15 70 L18 72 L13 74 Z" fill="#4a8ab8"/><path d="M17 77 L22 75 L23 79 L18 80 Z" fill="#7ba7d0"/>
 <rect x="33" y="66.5" width="15" height="2.5" fill="#7ba7d0"/><rect x="35" y="70" width="11" height="2.5" fill="#e8c88a"/><rect x="37" y="73.5" width="7" height="2.5" fill="#7ba7d0"/><rect x="38.5" y="77" width="4" height="2.5" fill="#7ba7d0"/>
 <path d="M57.5 80 A6.5 6.5 0 0 1 70.5 80" fill="none" stroke="#e8c88a" stroke-width="2.6" transform="translate(0,-0.5)"/><path d="M67 74.5 A6.5 6.5 0 0 1 70.5 79.5" fill="none" stroke="#7ab0c0" stroke-width="2.6"/>
 <rect x="80.5" y="67.5" width="14" height="12" fill="#fff" stroke="#aaa"/><text x="82" y="75.5" font-family="Liberation Sans" font-size="7" fill="#4a8ab8">123</text><rect x="82" y="77" width="11" height="1" fill="#8a7a6a"/>
 <rect x="104.5" y="65.5" width="14.5" height="15" fill="#fff" stroke="#aaa"/><rect x="106" y="67" width="2" height="12" fill="#b0b0b0"/><path d="M110 70 H115 M110 75 H115" stroke="#4a8ab8" stroke-width="1.2"/>
 <rect x="127.5" y="67.5" width="15" height="12" fill="#fff" stroke="#aaa"/><path d="M130 74 L132 71 L134 74 Z" fill="#4a8ab8"/><path d="M135.5 71 H139.5 L137.5 74 Z" fill="#e88850"/><rect x="130" y="76.5" width="10" height="1" fill="#8a7a6a"/>
 <!-- r5 -->
 <rect x="8" y="85.5" width="18" height="17.5" fill="none" stroke="#f2c811" stroke-width="1.6"/>
 <rect x="10" y="87.5" width="14" height="13.5" fill="#9a9a9a"/><rect x="11" y="89" width="2" height="2" fill="#555"/><rect x="11" y="93" width="2" height="2" fill="#555"/><rect x="11" y="97" width="2" height="2" fill="#555"/>
 <path d="M15 92 H23 L20 96 V100 L18 99 V96 Z" fill="#333"/>
 <rect x="33.5" y="87" width="13" height="14" fill="#fff"/><rect x="33.5" y="86" width="13" height="2" fill="#5a9ac0"/><path d="M33.5 91.5 H46.5 M33.5 96 H46.5 M37.8 88 V101 M42.2 88 V101" stroke="#888" stroke-width="0.9"/>
 <rect x="57" y="87" width="13" height="14" fill="#fff"/><rect x="57" y="86" width="13" height="2" fill="#5a9ac0"/><rect x="57" y="88" width="4" height="13" fill="#ccc"/><rect x="66" y="92" width="4" height="4" fill="#a8d0f0"/><path d="M57 91.5 H70 M57 96 H70 M61.3 88 V101 M65.7 88 V101" stroke="#888" stroke-width="0.9"/>
 <text x="81.5" y="101.5" font-family="Liberation Sans" font-weight="700" font-size="18" fill="#7ba7d0">R</text>
 <circle cx="107" cy="92.3" r="1.1" fill="#ddd"/><circle cx="111.6" cy="92.3" r="1.1" fill="#ddd"/><circle cx="116.4" cy="92.3" r="1.1" fill="#ddd"/>
</svg>
<!-- pane tabs -->
<svg class="a" style="left:822px;top:244px" width="172" height="31">
 <g fill="none" stroke="#d0d0d0" stroke-width="1">
  <path d="M18.5 6 H34.5" stroke-width="1.5"/>
  <rect x="18.5" y="9.5" width="16" height="13" stroke-dasharray="1.5,1"/>
  <path d="M18.5 14 H34.5 M18.5 18.5 H34.5" stroke-dasharray="1.5,1"/>
  <rect x="52.5" y="6.5" width="16" height="5" rx="1.5"/>
  <path d="M68.5 9 H70 V15 H60.5 V17"/>
  <rect x="58.5" y="17.5" width="4" height="6.5" rx="1"/>
  <circle cx="93" cy="14" r="7.3" stroke-width="1.1"/>
  <path d="M98.3 19.3 L102 23.5" stroke-width="1.4"/>
  <path d="M88.5 19 V16 M91 19.5 V14.5 M93.5 19.5 V15.5 M96 19 V13.5 M87.5 14.5 L90.5 12.5 L93.5 14.5 L98 11" stroke-width="1"/>
 </g>
</svg>
<!-- slicer decorations -->
<svg class="a" style="left:600px;top:94px" width="222" height="195">
 <path d="M14.5 12.5 V5.5 H21" fill="none" stroke="#a09890" stroke-width="2.8"/>
 <path d="M208.5 5.5 H215 V12" fill="none" stroke="#a09890" stroke-width="2.8"/>
 <path d="M14.5 180 V187.5 H21" fill="none" stroke="#a09890" stroke-width="2.6"/>
 <path d="M209 187.5 H215.5 V181" fill="none" stroke="#a09890" stroke-width="2.6"/>
 <rect x="109.5" y="4" width="9.5" height="2.8" fill="#a09890"/>
 <rect x="109" y="186.5" width="10" height="2.5" fill="#a09890"/>
 <rect x="12.5" y="92" width="3" height="9" fill="#a09890"/>
 <rect x="213.5" y="92" width="3" height="9" fill="#a09890"/>
 <path d="M107.5 11.5 H120.5 M107.5 14.5 H120.5" stroke="#8c8484" stroke-width="1"/>
 <path d="M182 7.5 H177 V17 H188 V12" fill="none" stroke="#a8a8a8" stroke-width="1.1"/>
 <path d="M177 13.5 H181.5 V17" fill="none" stroke="#8c8484" stroke-width="1"/>
 <path d="M182.5 12.5 L187.5 7.5 M184.5 7.5 H188 V11" fill="none" stroke="#a0a0a0" stroke-width="1"/>
 <circle cx="198" cy="12.2" r="1.1" fill="#777"/><circle cx="203.1" cy="12.2" r="1.1" fill="#777"/><circle cx="208.3" cy="12.2" r="1.1" fill="#777"/>
 <g fill="#fff" stroke="#c8c8c8" stroke-width="1" transform="translate(0,1)">
  <rect x="21.5" y="47.5" width="7" height="7"/><rect x="21.5" y="59" width="7" height="7"/><rect x="21.5" y="70.5" width="7" height="7"/><rect x="21.5" y="82" width="7" height="7"/><rect x="21.5" y="105" width="7" height="7"/>
 </g>
 <rect x="21" y="94" width="8" height="8" fill="#252423"/>
</svg>
<!-- bottom page strip -->
<div class="a" style="left:34px;top:553px;width:782px;height:4px;background:#ebebeb"></div>
<div class="a" style="left:61px;top:553px;width:1px;height:4px;background:#c8c8c8"></div>
<div class="a" style="left:188px;top:553px;width:1px;height:4px;background:#c8c8c8"></div>
<div class="a" style="left:277px;top:553px;width:1px;height:4px;background:#c8c8c8"></div>
<div class="a" style="left:388px;top:553px;width:1px;height:4px;background:#c8c8c8"></div>
<div class="a" style="left:492px;top:553px;width:1px;height:4px;background:#c8c8c8"></div>
<div class="a" style="left:607px;top:553px;width:1px;height:4px;background:#c8c8c8"></div>
<div class="a" style="left:729px;top:553px;width:1px;height:4px;background:#c8c8c8"></div>
<div class="a" style="left:787px;top:553px;width:33px;height:4px;background:#e8b84a"></div>

<div class="a" style="left:822px;top:275px;width:172px;height:282px;background:#3c3c3c"></div>
<div class="a" style="left:827px;top:278px;width:161px;height:25px;background:#1f1f1f;border:1px solid #111"></div>
<svg class="a" style="left:835px;top:282px" width="18" height="18"><circle cx="10.5" cy="6.5" r="4.5" stroke="#bdbdbd" stroke-width="1.2" fill="none"/><line x1="7.3" y1="9.7" x2="2" y2="15" stroke="#bdbdbd" stroke-width="1.3"/></svg>
<div class="a" style="left:857.3px;top:285px;font-size:10.2px;color:#c8c8c8;line-height:14px">Search</div>
<svg class="a" style="left:830px;top:316px" width="12" height="12"><path d="M1.5 3.5 L6 8 L10.5 3.5" stroke="#d0d0d0" stroke-width="1.2" fill="none"/></svg>
<div class="a" style="left:846.5px;top:315px;font-size:10px;color:#f0f0f0;line-height:14px">Selection Controls</div>
<div class="a" style="left:867px;top:272px;width:31px;height:2.5px;background:#e8b64a"></div>
<!-- header section -->
<div class="a" style="left:986px;top:328px;width:4.5px;height:176px;background:#5c5c5c;border-radius:2px"></div>
<div class="a" style="left:825px;top:333px;width:169px;height:222px;border:3px solid #f5e50a;border-right:none"></div>
<svg class="a" style="left:830px;top:345px" width="12" height="12"><path d="M1.5 8.5 L6 4 L10.5 8.5" stroke="#d0d0d0" stroke-width="1.2" fill="none"/></svg>
<div class="a" style="left:846.5px;top:344.5px;font-size:10px;color:#f0f0f0;line-height:14px">Header</div>
<div class="a" style="left:930px;top:344.5px;font-size:10px;color:#f0f0f0;line-height:14px">On</div>
<div class="a" style="left:955px;top:351px;width:14px;height:1.5px;background:#e8e8e8"></div>
<div class="a" style="left:967.5px;top:345.5px;width:13px;height:13px;border-radius:50%;background:#ffffff"></div>
<div class="a" style="left:828px;top:365px;width:157px;height:0;border-top:1px dotted #2c2c2c"></div>
<div class="a" style="left:831px;top:375.5px;font-size:10.1px;color:#f0f0f0;line-height:14px">Font color</div>
<div class="a" style="left:941px;top:371px;width:37px;height:20.5px;border:1px solid #333;background:#3c3c3c"></div>
<div class="a" style="left:945px;top:376px;width:11px;height:11px;background:#4a4a4a;border:1px solid #2e2e2e"></div>
<svg class="a" style="left:960px;top:378px" width="8" height="6"><path d="M0.5 1 H7.5 L4 5 Z" fill="#9a9a9a"/></svg>
<div class="a" style="left:831px;top:405.5px;font-size:10.1px;color:#f0f0f0;line-height:14px">Background</div>
<div class="a" style="left:941px;top:402px;width:37px;height:20px;border:1px solid #333;background:#3c3c3c"></div>
<div class="a" style="left:945px;top:406.5px;width:11.5px;height:11px;background:#f6d978"></div>
<svg class="a" style="left:960px;top:409px" width="8" height="6"><path d="M0.5 1 H7.5 L4 5 Z" fill="#9a9a9a"/></svg>
<div class="a" style="left:831px;top:436px;font-size:10.1px;color:#f0f0f0;line-height:14px">Outline</div>
<div class="a" style="left:904px;top:433.5px;width:76px;height:20px;background:#525252;border:1px solid #2e2e2e"></div>
<div class="a" style="left:908px;top:436.5px;font-size:10.3px;color:#f0f0f0;line-height:14px">Bottom only</div>
<svg class="a" style="left:966px;top:441px" width="8" height="6"><path d="M0.5 1 H7.5 L4 5 Z" fill="#a8a8a8"/></svg>
<div class="a" style="left:831px;top:466.5px;font-size:10.1px;color:#f0f0f0;line-height:14px">Text size</div>
<div class="a" style="left:926px;top:463.5px;width:54px;height:19.5px;background:#525252;border:1px solid #2e2e2e"></div>
<div class="a" style="left:933.5px;top:466.5px;font-size:10.3px;color:#f0f0f0;line-height:14px">20</div>
<svg class="a" style="left:964px;top:465px" width="12" height="17"><path d="M2 7 L6 3 L10 7 Z M2 10 L6 14 L10 10 Z" fill="#d8d8d8"/></svg>
<div class="a" style="left:831px;top:497px;font-size:10.1px;color:#f0f0f0;line-height:14px">Font family</div>
<div class="a" style="left:904px;top:494.5px;width:76px;height:20px;background:#525252;border:1px solid #2e2e2e"></div>
<div class="a" style="left:908px;top:497.5px;font-size:10.3px;color:#f0f0f0;line-height:14px">Georgia</div>
<svg class="a" style="left:966px;top:502px" width="8" height="6"><path d="M0.5 1 H7.5 L4 5 Z" fill="#a8a8a8"/></svg>
<div class="a" style="left:831px;top:532px;font-size:10.1px;color:#f0c030;line-height:14px">Revert to default</div>

</body></html>
